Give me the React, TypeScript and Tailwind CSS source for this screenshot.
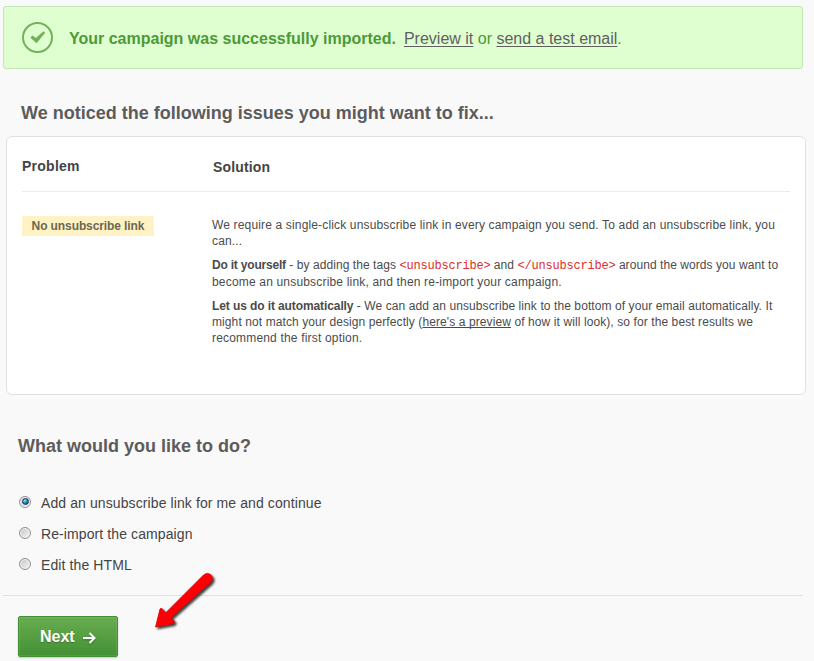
import { useState } from 'react'

const options = [
  'Add an unsubscribe link for me and continue',
  'Re-import the campaign',
  'Edit the HTML',
]

function SuccessBanner() {
  return (
    <div className="ml-[3px] flex h-[63px] w-[800px] items-center rounded-[3px] border border-[#c3e6b4] bg-[#e0ffd1] pl-[18px] text-base leading-5 text-[#4c9a38]">
      <svg className="h-8 w-8 shrink-0" viewBox="0 0 32 32" fill="none">
        <circle cx="15.5" cy="15.5" r="14.5" stroke="#72b157" strokeWidth="2" />
        <path d="M8.3 15.6l2.2-2.1 3.4 2.6 7.6-6.9 1.7 1.6-8.7 10.5z" fill="#72b157" />
      </svg>
      <p className="ml-[15px] whitespace-nowrap pt-[2px]">
        <strong className="mr-2 font-bold">Your campaign was successfully imported.</strong>
        <a className="text-[#5f5f5f] underline decoration-1 underline-offset-2 [text-decoration-skip-ink:none]">Preview it</a> or{' '}
        <a className="text-[#5f5f5f] underline decoration-1 underline-offset-2 [text-decoration-skip-ink:none]">send a test email</a>.
      </p>
    </div>
  )
}

function Tag({ children }: { children: string }) {
  return <code className="font-['Liberation_Mono',monospace] text-xs leading-none tracking-[-0.2px] text-[#dd2c2c]">{children}</code>
}

function IssuesCard() {
  return (
    <section className="ml-[6px] mt-3 h-[259px] w-[800px] rounded-md border border-[#e1e1e1] bg-white px-[15px]">
      <div className="flex h-[55px] border-b border-[#ebebeb] pt-[19px] text-sm font-bold text-[#444]">
        <h3 className="w-[191px] tracking-[0.25px]">Problem</h3>
        <h3 className="pt-px tracking-[0.15px]">Solution</h3>
      </div>
      <div className="flex pt-6 text-xs leading-4 text-[#4b4b4b]">
        <div className="w-[190px] shrink-0">
          <span className="flex h-5 w-[132px] items-center justify-center bg-[#fff3c6] font-bold tracking-[-0.1px] text-[#6d6650]">
            No unsubscribe link
          </span>
        </div>
        <div className="whitespace-nowrap pt-px">
          <p className="tracking-[0.155px]">
            We require a single-click unsubscribe link in every campaign you send. To add an unsubscribe link, you
            <br />
            can...
          </p>
          <p className="mt-2 tracking-[0.065px]">
            <strong className="tracking-[-0.2px]">Do it yourself</strong> - by adding the tags <Tag>{'<unsubscribe>'}</Tag> and{' '}
            <Tag>{'</unsubscribe>'}</Tag> around the words you want to
            <br />
            <span className="inline-block pt-px tracking-[0.18px]">become an unsubscribe link, and then re-import your campaign.</span>
          </p>
          <p className="mt-2 tracking-[0.09px]">
            <strong className="tracking-[-0.1px]">Let us do it automatically</strong> - We can add an unsubscribe link to the bottom of your email automatically. It
            <br />
            <span className="tracking-[0.095px]">
              might not match your design perfectly (
              <a className="underline decoration-1 underline-offset-1 [text-decoration-skip-ink:none]">here's a preview</a> of how it will look), so for the best results we
            </span>
            <br />
            <span className="tracking-[0.18px]">recommend the first option.</span>
          </p>
        </div>
      </div>
    </section>
  )
}

function Radio({ checked }: { checked: boolean }) {
  return (
    <span className="flex h-3 w-3 items-center justify-center rounded-full border border-[#909090] bg-linear-to-br from-[#c4c6c9] to-[#f5f5f5] shadow-[inset_0_0_0_1px_#f4f4f4]">
      {checked && (
        <span className="h-[7px] w-[7px] shrink-0 rounded-full border border-[#173954] bg-radial-[at_35%_30%] from-[#9be4ff] via-[#2387b8] to-[#0b3d62]" />
      )}
    </span>
  )
}

export default function App() {
  const [selected, setSelected] = useState(0)

  return (
    <main className="relative h-[661px] w-[814px] overflow-hidden bg-[#f9f9f9] pt-[6px] font-['Liberation_Sans',Arial,sans-serif]">
      <SuccessBanner />
      <h2 className="ml-[21px] mt-[33px] text-lg leading-[22px] font-bold text-[#5c5c5c]">
        We noticed the following issues you might want to fix...
      </h2>
      <IssuesCard />
      <h2 className="ml-[18px] mt-10 text-lg leading-[22px] font-bold text-[#5c5c5c]">What would you like to do?</h2>
      <div className="ml-[19px] mt-[29px] flex flex-col" role="radiogroup">
        {options.map((label, i) => (
          <button
            key={label}
            role="radio"
            aria-checked={selected === i}
            onClick={() => setSelected(i)}
            className="flex h-[31px] items-center text-left text-sm tracking-[0.1px] text-[#444]"
          >
            <Radio checked={selected === i} />
            <span className="ml-[10px] pt-[3px]">{label}</span>
          </button>
        ))}
      </div>
      <hr className="ml-[3px] mt-4 w-[800px] border-[#e1e1e1]" />
      <button className="ml-[18px] mt-5 flex h-[41px] w-[100px] items-center rounded-[2px] border border-[#438f36] bg-linear-to-b from-[#68ac50] to-[#429134] pl-[21px] text-base font-bold text-white shadow-[0_1px_2px_#0003,inset_0_0_0_1px_#ffffff18] text-shadow-[0_1px_1px_#0004]">
        Next
        <svg className="ml-2 mt-[3px] h-3 w-[13px] drop-shadow-[0_1px_1px_#0004]" viewBox="0 0 13 12" fill="none" stroke="white" strokeWidth="2">
          <path d="M0 6h11.5M6.5 1L11.5 6l-5 5" />
        </svg>
      </button>
      {/* pointer drawn over the page */}
      <svg className="absolute left-[150px] top-[565px] h-[72px] w-[72px] drop-shadow-[2px_2px_1px_#000b]" viewBox="0 0 72 72">
        <path
          d="M53.5 10Q57.5 6.8 61 10Q64 13.5 60.5 17.5L21 52.5L24.5 56.5Q24.5 58.5 21.5 59L5.5 62L10 44Q11 42.5 12.5 44L15.5 48Z"
          fill="#fd0006"
          stroke="#dc0004"
          strokeWidth=".8"
          strokeLinejoin="round"
        />
      </svg>
    </main>
  )
}
